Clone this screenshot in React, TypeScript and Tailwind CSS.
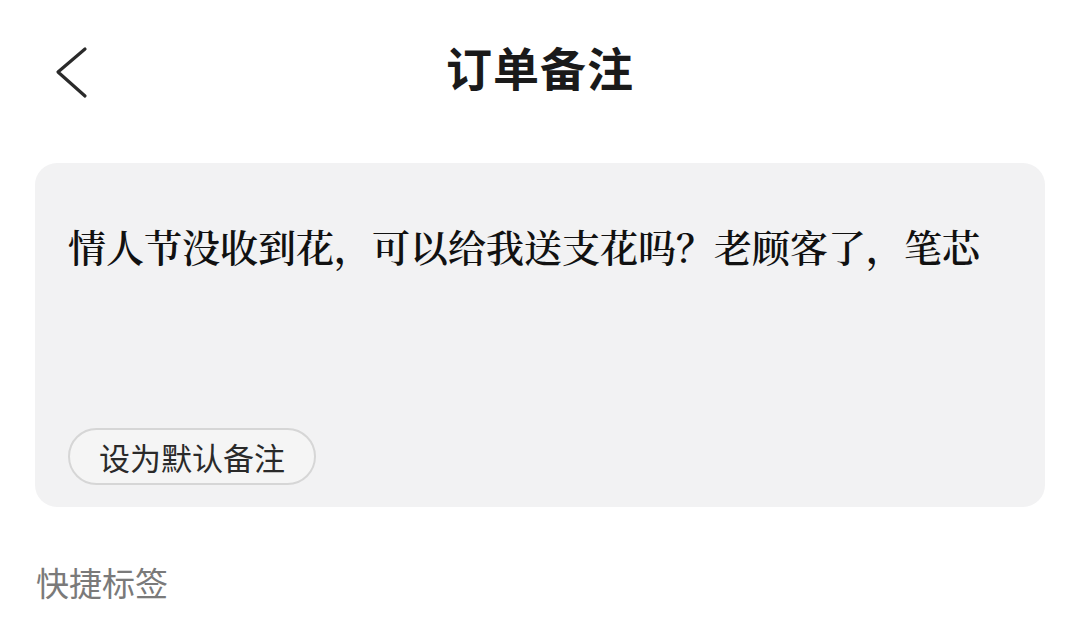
import { useState } from "react";

const sans = "font-['Noto_Sans_CJK_SC','Noto_Sans',sans-serif]";

export default function App() {
  const [note] = useState("情人节没收到花，可以给我送支花吗？老顾客了，笔芯");

  return (
    <div className={`w-[1080px] h-[621px] bg-white overflow-hidden ${sans}`}>
      {/* header */}
      <div className="relative h-[140px] flex items-start justify-center pt-[34px]">
        <button className="absolute left-[51px] top-[42px] p-1">
          <svg width="34" height="54" viewBox="0 0 34 54" fill="none">
            <path
              d="M30 3 L3 26 L30 50"
              stroke="#2a2a2a"
              strokeWidth="3.2"
              strokeLinecap="round"
              strokeLinejoin="round"
            />
          </svg>
        </button>
        <h1 className="text-[46px] leading-[64px] font-bold text-[#1a1a1a] tracking-[1px]">
          订单备注
        </h1>
      </div>

      {/* note card */}
      <div className="mx-[35px] mt-[23px] h-[344px] rounded-[22px] bg-[#f2f2f3] px-[33px] pt-[57px] pb-[22px] flex flex-col justify-between">
        <p className="text-[38px] leading-[52px] text-[#111] font-['Noto_Serif_CJK_SC','Noto_Sans_CJK_SC',serif] font-semibold">
          {note}
        </p>
        <div>
          <button className="h-[57px] px-[29px] rounded-full border-2 border-[#d6d6d6] bg-[#f5f5f5] text-[31px] font-normal text-[#2a2a2a] leading-none">
            设为默认备注
          </button>
        </div>
      </div>

      {/* quick tags */}
      <div className="px-[36px] mt-[53px]">
        <h2 className="text-[33px] leading-[44px] text-[#7a7a7a]">快捷标签</h2>
      </div>
    </div>
  );
}
